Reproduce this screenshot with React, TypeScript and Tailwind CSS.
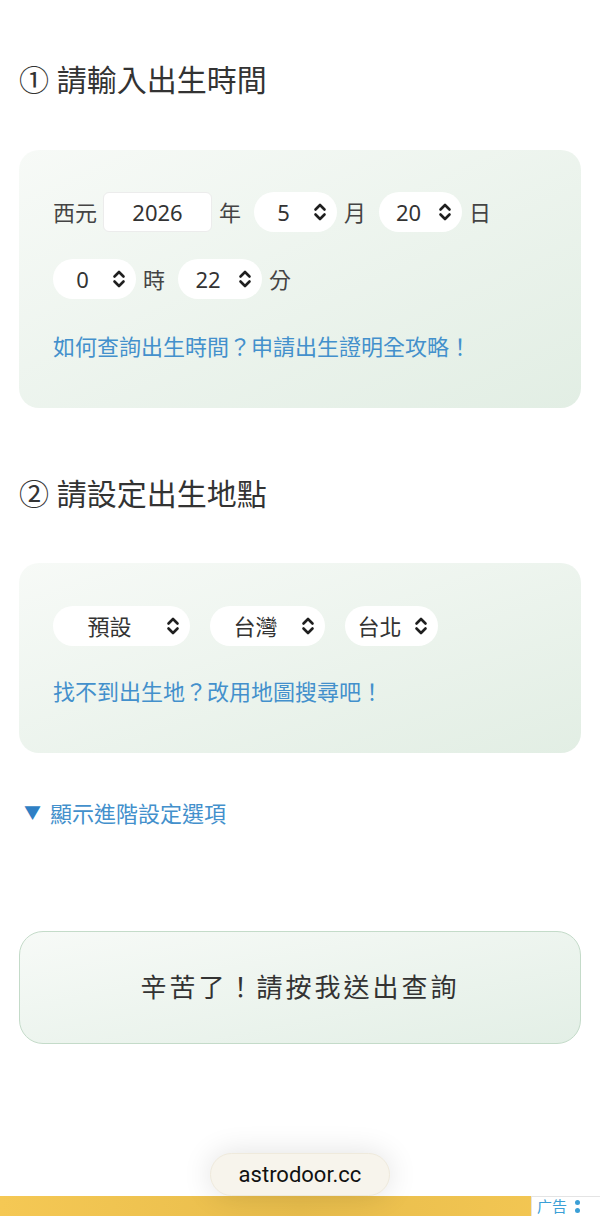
const font = { fontFamily: '"Noto Sans", "Noto Sans CJK TC", sans-serif' };

function Chevrons() {
  return (
    <svg width="14" height="20" viewBox="0 0 14 20" fill="none" stroke="#1f1f1f" strokeWidth="2.6" strokeLinecap="round" strokeLinejoin="round">
      <path d="M2.5 7.5 L7 3 L11.5 7.5" />
      <path d="M2.5 12.5 L7 17 L11.5 12.5" />
    </svg>
  );
}

function Select({ value, width }: { value: string; width: string }) {
  return (
    <div className={`flex h-[40px] items-center rounded-full bg-white pr-[10px] ${width}`}>
      <span className="flex-1 text-center text-[22px] text-[#333]">{value}</span>
      <Chevrons />
    </div>
  );
}

function Label({ children }: { children: string }) {
  return <span className="ml-[7px] mr-[13px] text-[22px] text-[#444]">{children}</span>;
}

export default function App() {
  return (
    <div className="relative flex h-[1216px] flex-col overflow-hidden bg-white" style={font}>
      <div className="px-[19px]">
        <h2 className="mt-[60px] h-[40px] text-[30px] leading-[40px] text-[#333]">① 請輸入出生時間</h2>

        <div className="mt-[50px] rounded-[20px] bg-linear-to-br from-[#f7faf7] to-[#e2eee4] px-[34px] pt-[42px] pb-[44px]">
          <div className="flex h-[40px] items-center">
            <span className="mr-[6px] text-[22px] text-[#444]">西元</span>
            <div className="flex h-[40px] w-[109px] items-center justify-center rounded-[6px] border border-[#ececec] bg-white text-[22px] text-[#333]">
              2026
            </div>
            <Label>年</Label>
            <Select value="5" width="w-[83px]" />
            <Label>月</Label>
            <Select value="20" width="w-[83px]" />
            <Label>日</Label>
          </div>
          <div className="mt-[27px] flex h-[40px] items-center">
            <Select value="0" width="w-[83px]" />
            <Label>時</Label>
            <Select value="22" width="w-[84px]" />
            <Label>分</Label>
          </div>
          <p className="mt-[29px] text-[22px] leading-[36px] text-[#4390cc]">
            如何查詢出生時間？申請出生證明全攻略！
          </p>
        </div>

        <h2 className="mt-[66px] h-[40px] text-[30px] leading-[40px] text-[#333]">② 請設定出生地點</h2>

        <div className="mt-[49px] rounded-[20px] bg-linear-to-br from-[#f7faf7] to-[#e2eee4] px-[34px] pt-[43px] pb-[44px]">
          <div className="flex h-[40px] items-center gap-[20px]">
            <Select value="預設" width="w-[137px]" />
            <Select value="台灣" width="w-[115px]" />
            <Select value="台北" width="w-[93px]" />
          </div>
          <p className="mt-[27px] text-[22px] leading-[36px] text-[#4390cc]">找不到出生地？改用地圖搜尋吧！</p>
        </div>

        <p className="mt-[42px] flex items-center pl-[5px] text-[22px] leading-[36px] text-[#4390cc]">
          <span className="mr-[9px] text-[17px] text-[#2f7fc4]">▼</span>顯示進階設定選項
        </p>

        <button className="mt-[100px] flex h-[113px] w-full items-center justify-center rounded-[24px] border border-[#c4dbc9] bg-linear-to-br from-[#f7faf7] to-[#e3efe6] text-[26px] tracking-[3px] text-[#333]">
          辛苦了！請按我送出查詢
        </button>
      </div>

      <div className="mt-auto flex h-[20px] items-start justify-end bg-linear-to-r from-[#f5c854] via-[#e8bd4c] to-[#f5c854]">
        <div className="flex h-[20px] w-[69px] items-center gap-[8px] border-t border-l border-[#e4e4e4] bg-white pl-[5px] text-[15px] leading-[17px] text-[#3b9fd6]">
          <span>广告</span>
          <span className="flex flex-col gap-[3px]">
            <span className="h-[5px] w-[5px] rounded-full bg-[#3b9fd6]" />
            <span className="h-[5px] w-[5px] rounded-full bg-[#3b9fd6]" />
          </span>
        </div>
      </div>

      <div className="absolute bottom-[20px] left-[210px] flex h-[43px] w-[180px] items-center justify-center rounded-full border border-[#efeadc] bg-[#f7f4ec] text-[22px] text-[#111] shadow-[0_0_30px_rgba(0,0,0,0.12)]" style={{ fontFamily: 'Roboto, "Noto Sans", sans-serif' }}>
        astrodoor.cc
      </div>
    </div>
  );
}
